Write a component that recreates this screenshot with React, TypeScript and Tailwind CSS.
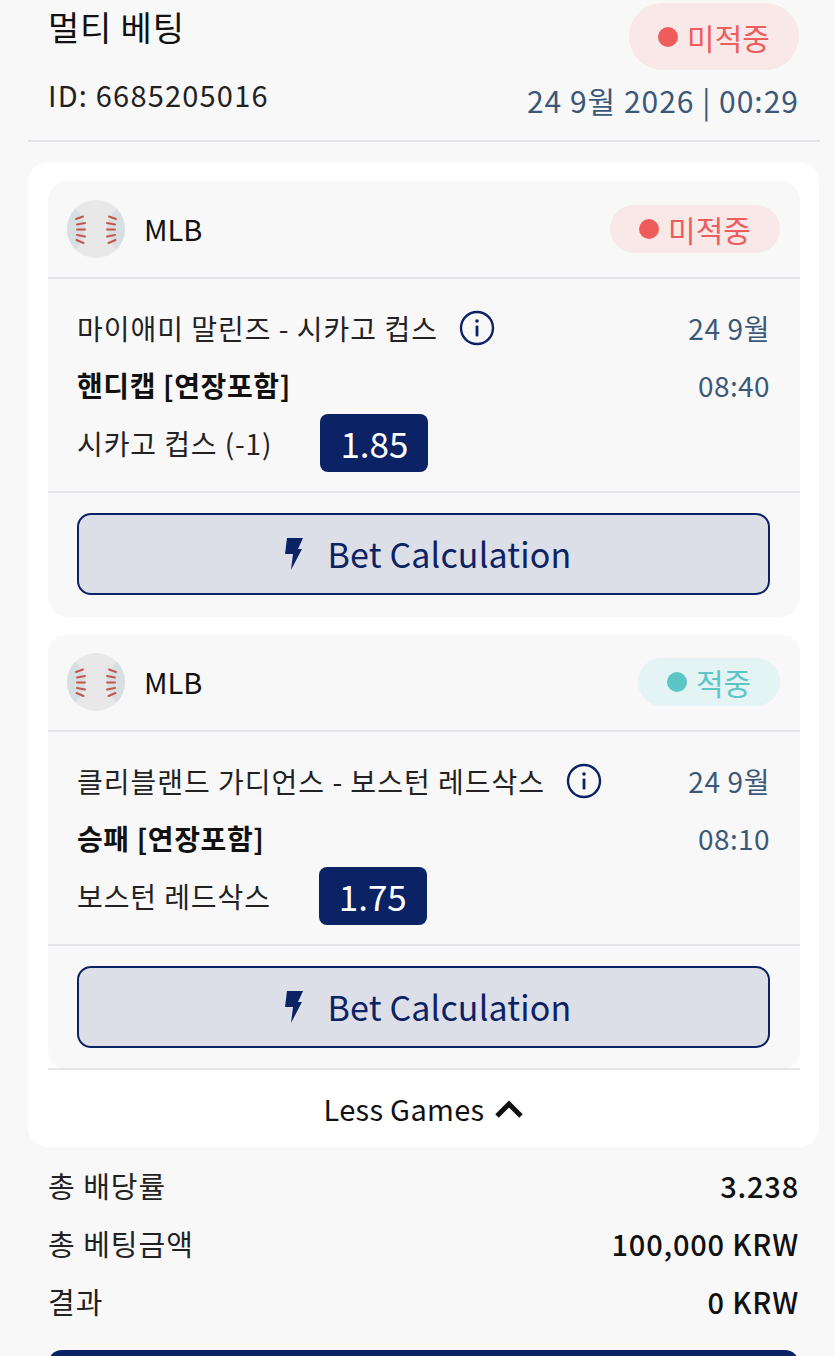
import React from "react";

const font = { fontFamily: '"Noto Sans CJK KR", "Noto Sans", sans-serif' };

const Baseball: React.FC = () => (
  <svg viewBox="0 0 58 58" className="w-[58px] h-[58px] shrink-0">
    <circle cx="29" cy="29" r="29" fill="#e8e8e8" />
    <path d="M8.5 8.5 A29 29 0 0 0 8.5 49.5 Q18 40 18 29 Q18 18 8.5 8.5Z" fill="#d8dfe2" />
    <path d="M49.5 8.5 A29 29 0 0 1 49.5 49.5 Q40 40 40 29 Q40 18 49.5 8.5Z" fill="#d8dfe2" />
    <g stroke="#c4574f" strokeWidth="2" strokeLinecap="round" fill="none">
      <path d="M9 19 L16 16.5" />
      <path d="M10 24.5 L18 23" />
      <path d="M10 29.5 L18 29.5" />
      <path d="M10 35 L18 36.5" />
      <path d="M9.5 40 L16.5 43" />
      <path d="M49 19 L42 16.5" />
      <path d="M48 24.5 L40 23" />
      <path d="M48 29.5 L40 29.5" />
      <path d="M48 35 L40 36.5" />
      <path d="M48.5 40 L41.5 43" />
    </g>
  </svg>
);

const Bolt: React.FC = () => (
  <svg viewBox="0 0 18 32" className="w-[18px] h-[32px]">
    <path d="M2 0 H18 L13 11 H17 L6 32 L8 16 H0 Z" fill="#0b2265" />
  </svg>
);

const Info: React.FC = () => (
  <svg viewBox="0 0 36 36" className="w-[36px] h-[36px] shrink-0">
    <circle cx="18" cy="18" r="16" fill="none" stroke="#0b2265" strokeWidth="2.4" />
    <circle cx="18" cy="11" r="1.8" fill="#0b2265" />
    <rect x="16.6" y="15.5" width="2.8" height="11" rx="1" fill="#0b2265" />
  </svg>
);

const LostPill: React.FC<{ className: string }> = ({ className }) => (
  <div className={`flex items-center justify-center bg-[#f8e8e8] text-[#ee5c5c] ${className}`}>
    <span className="w-5 h-5 rounded-full bg-[#ee5c5c] mr-[9px]" />
    <span className="text-[30px] leading-none">미적중</span>
  </div>
);

const WonPill: React.FC = () => (
  <div className="flex items-center justify-center w-[142px] h-[48px] rounded-[24px] bg-[#e4f3f3] text-[#5cc5c5]">
    <span className="w-5 h-5 rounded-full bg-[#5cc5c5] mr-[9px]" />
    <span className="text-[30px] leading-none">적중</span>
  </div>
);

type GameProps = {
  pill: React.ReactNode;
  match: string;
  market: string;
  pick: string;
  odds: string;
  time: string;
  gap: string;
};

const Game: React.FC<GameProps> = ({ pill, match, market, pick, odds, time, gap }) => (
  <div className="bg-[#f8f8f8] rounded-[20px]">
    <div className="flex items-center justify-between h-[98px] pl-[19px] pr-[20px] border-b-2 border-[#e4e6ea]">
      <div className="flex items-center gap-[19px]">
        <Baseball />
        <span className="text-[29px] text-[#111]">MLB</span>
      </div>
      {pill}
    </div>
    <div className="h-[214px] pl-[29px] pr-[30px] pt-[29px] border-b-2 border-[#e4e6ea]">
      <div className="flex items-center justify-between h-[40px]">
        <div className="flex items-center gap-[21px]">
          <span className="text-[28px] tracking-[1px] text-[#222]">{match}</span>
          <Info />
        </div>
        <span className="text-[28px] tracking-[0.6px] text-[#3c5878]">24 9월</span>
      </div>
      <div className="flex items-center justify-between h-[40px] mt-[17px]">
        <span className="text-[28px] tracking-[0.6px] font-bold text-[#111]">{market}</span>
        <span className="text-[28px] tracking-[0.4px] text-[#3c5878]">{time}</span>
      </div>
      <div className={`flex items-center h-[58px] mt-[9px] ${gap}`}>
        <span className="text-[28px] tracking-[0.9px] text-[#222]">{pick}</span>
        <span className="flex items-center justify-center w-[108px] h-[58px] rounded-[8px] bg-[#0b2265] text-white text-[35px]">
          {odds}
        </span>
      </div>
    </div>
    <div className="pl-[29px] pr-[30px] pt-[20px] pb-[22px]">
      <div className="flex items-center justify-center gap-[25px] pl-[9px] h-[82px] rounded-[14px] border-2 border-[#0b2265] bg-[#dcdfe7]">
        <Bolt />
        <span className="text-[34px] tracking-[0.15px] pb-[2px] text-[#0b2265]">Bet Calculation</span>
      </div>
    </div>
  </div>
);

const Row: React.FC<{ label: string; value: string }> = ({ label, value }) => (
  <div className="flex items-center justify-between h-[58px]">
    <span className="text-[29px] tracking-[1px] text-[#222]">{label}</span>
    <span className="text-[29px] tracking-[0.8px] font-medium text-[#111]">{value}</span>
  </div>
);

export default function App() {
  return (
    <div style={font} className="h-[1356px] w-[835px] overflow-hidden bg-[#f8f8f8]">
      <div className="pt-[3px] ml-[28px] w-[792px] h-[142px] border-b-2 border-[#e2e4e8]">
        <div className="flex justify-between pl-[20px] pr-[21px]">
          <span className="text-[34px] tracking-[0.8px] leading-[48px] text-[#111]">멀티 베팅</span>
          <LostPill className="w-[170px] h-[67px] rounded-[34px]" />
        </div>
        <div className="flex justify-between items-center pl-[20px] pr-[21px]">
          <span className="text-[29px] tracking-[1.2px] leading-[52px] -mt-[8px] text-[#222]">ID: 6685205016</span>
          <span className="text-[30px] tracking-[1px] leading-[52px] mt-[4px] text-[#3c5878]">24 9월 2026 | 00:29</span>
        </div>
      </div>

      <div className="ml-[28px] w-[791px] mt-[20px] bg-white rounded-[20px] pl-[20px] pr-[19px] pt-[19px]">
        <div className="flex flex-col gap-[17px]">
          <Game
            pill={<LostPill className="w-[170px] h-[48px] rounded-[24px]" />}
            match="마이애미 말린즈 - 시카고 컵스"
            market="핸디캡 [연장포함]"
            pick="시카고 컵스 (-1)"
            odds="1.85"
            time="08:40"
            gap="gap-[48px]"
          />
          <div className="h-[436px] overflow-hidden border-b-2 border-[#e4e6ea]">
            <Game
              pill={<WonPill />}
              match="클리블랜드 가디언스 - 보스턴 레드삭스"
              market="승패 [연장포함]"
              pick="보스턴 레드삭스"
              odds="1.75"
              time="08:10"
              gap="gap-[48px]"
            />
          </div>
        </div>
        <div className="flex items-center justify-center gap-[10px] h-[77px] text-[29px] tracking-[0.3px] text-[#111]">
          <span>Less Games</span>
          <svg viewBox="0 0 30 20" className="w-[30px] h-[20px]">
            <path d="M3 17 L15 5 L27 17" fill="none" stroke="#111" strokeWidth="5" strokeLinejoin="miter" />
          </svg>
        </div>
      </div>

      <div className="pl-[48px] pr-[36px] pt-[10px]">
        <Row label="총 배당률" value="3.238" />
        <Row label="총 베팅금액" value="100,000 KRW" />
        <Row label="결과" value="0 KRW" />
      </div>
      <div className="ml-[48px] mr-[36px] mt-[19px] h-[60px] rounded-[14px] bg-[#0b2265]" />
    </div>
  );
}
